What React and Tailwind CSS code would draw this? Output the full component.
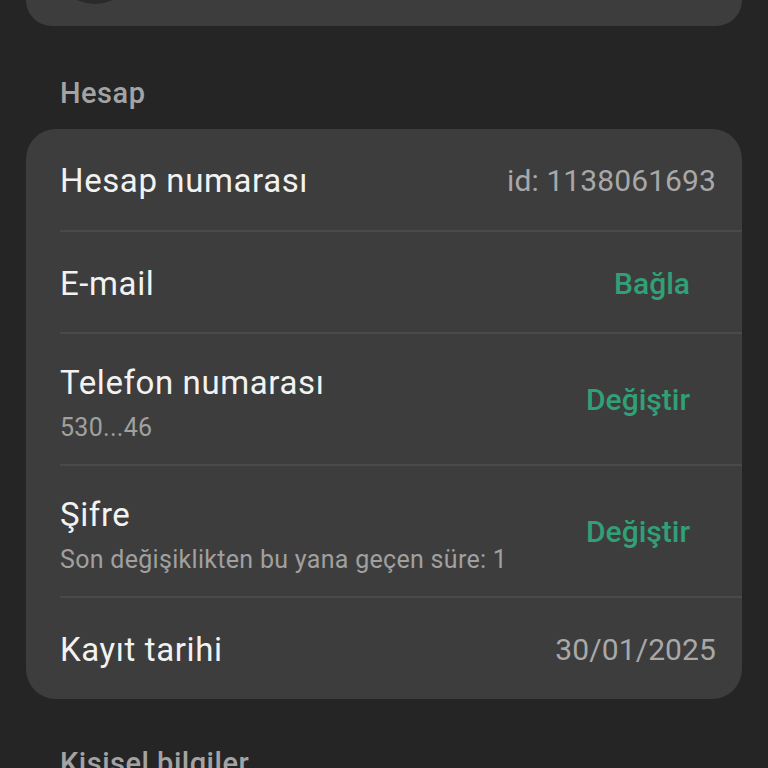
import React from "react";

const font = { fontFamily: "Roboto, 'Noto Sans', sans-serif" };

function SimpleRow({ title, value }) {
  return (
    <div className="h-[101px] flex items-center justify-between pl-[34px] pr-[26px] pt-[3px]">
      <span className="text-[33px] leading-[40px] tracking-[0.6px] text-[#f2f2f2]">{title}</span>
      <span className="text-[30px] leading-[36px] tracking-[0.1px] text-[#a8a8a8]">{value}</span>
    </div>
  );
}

function TwoLineRow({ title, sub, action }) {
  return (
    <div className="h-[130px] flex items-center justify-between pl-[34px] pr-[52px]">
      <div className="flex flex-col self-start pt-[29px]">
        <span className="text-[33px] leading-[40px] tracking-[0.6px] text-[#f2f2f2]">{title}</span>
        <span className="mt-[10px] text-[25px] leading-[30px] tracking-[0.3px] text-[#a0a0a0]">{sub}</span>
      </div>
      <span className="pt-[2px] text-[30px] leading-[36px] font-medium text-[#31a077]">{action}</span>
    </div>
  );
}

function Divider() {
  return <div className="ml-[34px] h-[2px] bg-[#4a4a4a]" />;
}

export default function App() {
  return (
    <div className="w-[768px] h-[768px] overflow-hidden bg-[#252525]" style={font}>
      <div className="relative mx-[26px] h-[26px] overflow-hidden rounded-b-[30px] bg-[#3d3d3d]">
        <div className="absolute left-[27px] top-[-80px] h-[84px] w-[84px] rounded-full bg-[#2a2a2a]" />
      </div>

      <div className="px-[60px] pt-[49px] pb-[18px] text-[29px] leading-[36px] tracking-[0.5px] font-medium text-[#a3a3a3]">
        Hesap
      </div>

      <div className="mx-[26px] overflow-hidden rounded-[30px] bg-[#3d3d3d]">
        <SimpleRow title="Hesap numarası" value="id: 1138061693" />
        <Divider />
        <div className="h-[100px] flex items-center justify-between pl-[34px] pr-[52px] pt-[4px]">
          <span className="text-[33px] leading-[40px] tracking-[0.6px] text-[#f2f2f2]">E-mail</span>
          <span className="text-[30px] leading-[36px] font-medium text-[#31a077]">Bağla</span>
        </div>
        <Divider />
        <TwoLineRow title="Telefon numarası" sub="530...46" action="Değiştir" />
        <Divider />
        <TwoLineRow
          title="Şifre"
          sub="Son değişiklikten bu yana geçen süre: 1"
          action="Değiştir"
        />
        <Divider />
        <SimpleRow title="Kayıt tarihi" value="30/01/2025" />
      </div>

      <div className="px-[60px] pt-[46px] text-[29px] leading-[36px] tracking-[0.5px] font-medium text-[#a3a3a3]">
        Kişisel bilgiler
      </div>
    </div>
  );
}
